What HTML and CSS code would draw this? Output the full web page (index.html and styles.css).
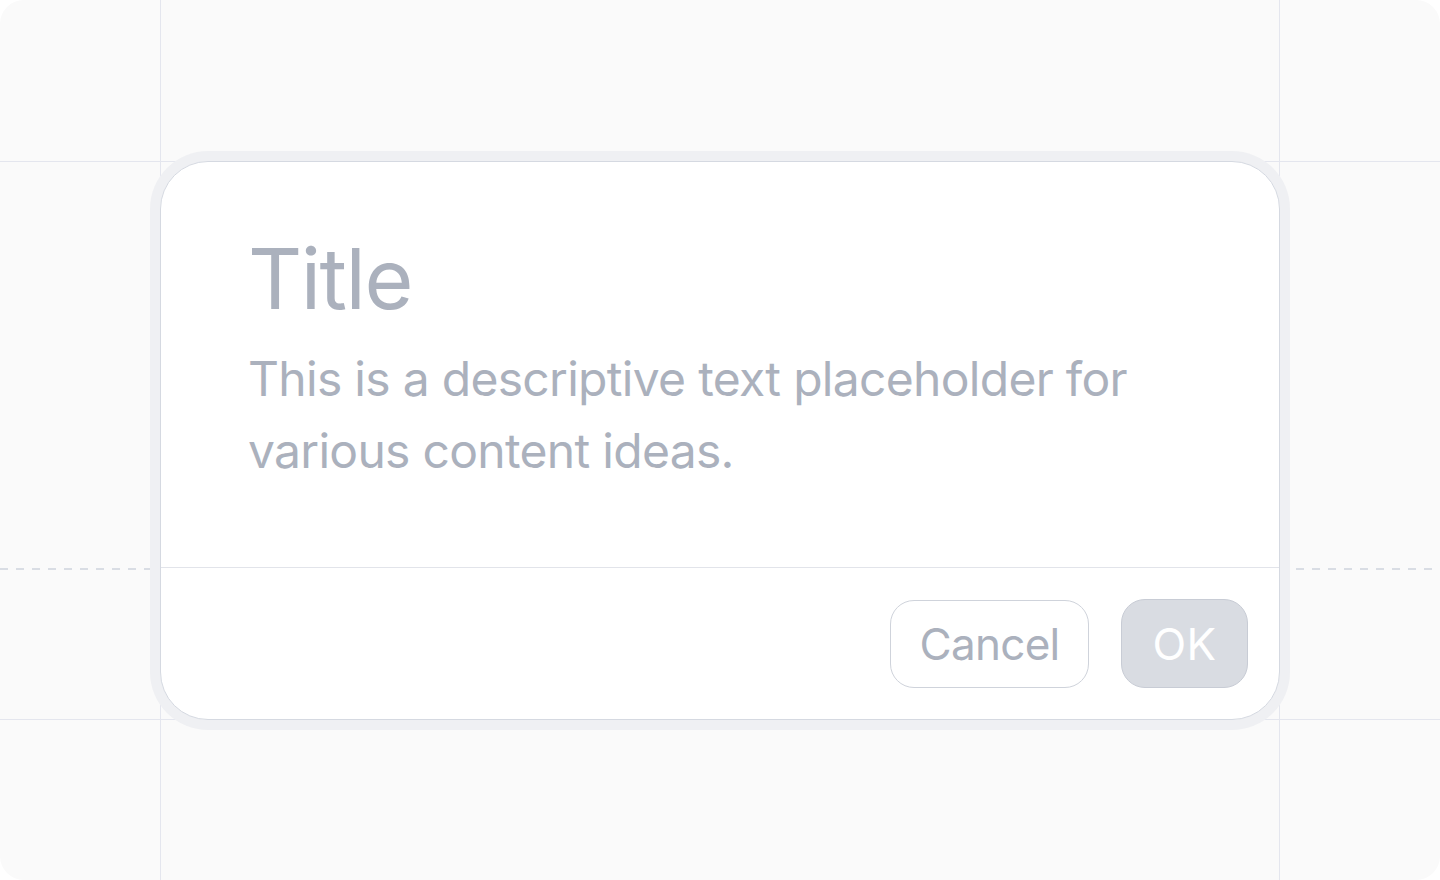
FILE: index.html
```html
<!DOCTYPE html>
<html>
<head>
<meta charset="utf-8">
<link rel="stylesheet" href="styles.css">
</head>
<body>
<div class="canvas">
  <div class="guide guide-v guide-left"></div>
  <div class="guide guide-v guide-right"></div>
  <div class="guide guide-h guide-top"></div>
  <div class="guide guide-h guide-bottom"></div>
  <div class="guide guide-dash"></div>
  <div class="dialog">
    <div class="dialog-body">
      <h1 class="title">Title</h1>
      <p class="desc">This is a descriptive text placeholder for various content ideas.</p>
    </div>
    <div class="dialog-footer">
      <button class="btn btn-cancel">Cancel</button>
      <button class="btn btn-ok">OK</button>
    </div>
  </div>
</div>
</body>
</html>
```
FILE: styles.css
```css
html, body {
  margin: 0;
  padding: 0;
  background: #ffffff;
}
body {
  font-family: Inter, "Noto Sans", sans-serif;
}
.canvas {
  position: relative;
  width: 1440px;
  height: 880px;
  box-sizing: border-box;
  background: #fafafa;
  border-radius: 24px;
  overflow: hidden;
  padding: 161px 0 0 160px;
}
.guide {
  position: absolute;
  background: #e4e6ee;
}
.guide-v {
  top: 0;
  bottom: 0;
  width: 1px;
}
.guide-left { left: 160px; }
.guide-right { left: 1279px; }
.guide-h {
  left: 0;
  right: 0;
  height: 1px;
}
.guide-top { top: 161px; }
.guide-bottom { top: 719px; }
.guide-dash {
  left: 0;
  right: 0;
  top: 568px;
  height: 2px;
  background: repeating-linear-gradient(90deg, #d9dde4 0 8px, transparent 8px 16px);
}
.dialog {
  position: relative;
  width: 1120px;
  height: 559px;
  box-sizing: border-box;
  background: #ffffff;
  border: 1px solid #d5d9e1;
  border-radius: 48px;
  box-shadow: 0 0 0 10px #eff0f3;
  display: flex;
  flex-direction: column;
}
.dialog-body {
  flex: 1;
  padding: 66px 90px 0 87px;
}
.title {
  margin: 0;
  font-size: 84px;
  font-weight: 400;
  line-height: 1.21;
  color: #abb1bd;
  letter-spacing: -1.5px;
}
.desc {
  margin: 13px 0 0;
  font-size: 48px;
  line-height: 72px;
  color: #abb1bd;
  letter-spacing: -0.7px;
  max-width: 940px;
}
.dialog-footer {
  border-top: 1px solid #e2e4ea;
  padding: 31px 31px 31px;
  display: flex;
  justify-content: flex-end;
  align-items: center;
  gap: 32px;
}
.btn {
  font-family: Inter, "Noto Sans", sans-serif;
  font-size: 44px;
  height: 88px;
  border-radius: 24px;
  box-sizing: border-box;
  padding: 0;
  cursor: pointer;
}
.btn-cancel {
  width: 199px;
  background: #ffffff;
  border: 1px solid #cfd3db;
  color: #abb1bd;
  letter-spacing: -0.7px;
}
.btn-ok {
  width: 127px;
  height: 89px;
  background: #d9dce2;
  border: 1px solid #c8ccd5;
  color: #ffffff;
  letter-spacing: 0.5px;
}
```
